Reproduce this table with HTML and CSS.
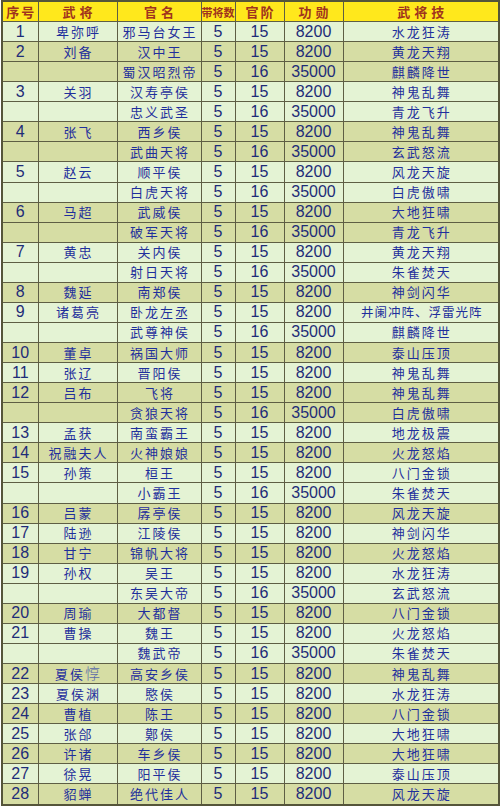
FILE: index.html
```html
<!DOCTYPE html>
<html lang="zh">
<head>
<meta charset="utf-8">
<title>武将表</title>
<link rel="stylesheet" href="styles.css">
</head>
<body>
<table class="sheet">
<colgroup>
<col class="c1"><col class="c2"><col class="c3"><col class="c4"><col class="c5"><col class="c6"><col class="c7">
</colgroup>
<thead>
<tr class="head">
<th class="tight">序号</th><th>武将</th><th>官名</th><th class="small">带将数</th><th class="tight">官阶</th><th>功勋</th><th>武将技</th>
</tr>
</thead>
<tbody>
<tr class="a"><td class="n">1</td><td class="t">卑弥呼</td><td class="t">邪马台女王</td><td class="n">5</td><td class="n">15</td><td class="n">8200</td><td class="t">水龙狂涛</td></tr>
<tr class="b"><td class="n">2</td><td class="t">刘备</td><td class="t">汉中王</td><td class="n">5</td><td class="n">15</td><td class="n">8200</td><td class="t">黄龙天翔</td></tr>
<tr class="b"><td></td><td></td><td class="t">蜀汉昭烈帝</td><td class="n">5</td><td class="n">16</td><td class="n">35000</td><td class="t">麒麟降世</td></tr>
<tr class="a"><td class="n">3</td><td class="t">关羽</td><td class="t">汉寿亭侯</td><td class="n">5</td><td class="n">15</td><td class="n">8200</td><td class="t">神鬼乱舞</td></tr>
<tr class="a"><td></td><td></td><td class="t">忠义武圣</td><td class="n">5</td><td class="n">16</td><td class="n">35000</td><td class="t">青龙飞升</td></tr>
<tr class="b"><td class="n">4</td><td class="t">张飞</td><td class="t">西乡侯</td><td class="n">5</td><td class="n">15</td><td class="n">8200</td><td class="t">神鬼乱舞</td></tr>
<tr class="b"><td></td><td></td><td class="t">武曲天将</td><td class="n">5</td><td class="n">16</td><td class="n">35000</td><td class="t">玄武怒流</td></tr>
<tr class="a"><td class="n">5</td><td class="t">赵云</td><td class="t">顺平侯</td><td class="n">5</td><td class="n">15</td><td class="n">8200</td><td class="t">风龙天旋</td></tr>
<tr class="a"><td></td><td></td><td class="t">白虎天将</td><td class="n">5</td><td class="n">16</td><td class="n">35000</td><td class="t">白虎傲啸</td></tr>
<tr class="b"><td class="n">6</td><td class="t">马超</td><td class="t">武威侯</td><td class="n">5</td><td class="n">15</td><td class="n">8200</td><td class="t">大地狂啸</td></tr>
<tr class="b"><td></td><td></td><td class="t">破军天将</td><td class="n">5</td><td class="n">16</td><td class="n">35000</td><td class="t">青龙飞升</td></tr>
<tr class="a"><td class="n">7</td><td class="t">黄忠</td><td class="t">关内侯</td><td class="n">5</td><td class="n">15</td><td class="n">8200</td><td class="t">黄龙天翔</td></tr>
<tr class="a"><td></td><td></td><td class="t">射日天将</td><td class="n">5</td><td class="n">16</td><td class="n">35000</td><td class="t">朱雀焚天</td></tr>
<tr class="b"><td class="n">8</td><td class="t">魏延</td><td class="t">南郑侯</td><td class="n">5</td><td class="n">15</td><td class="n">8200</td><td class="t">神剑闪华</td></tr>
<tr class="a"><td class="n">9</td><td class="t">诸葛亮</td><td class="t">卧龙左丞</td><td class="n">5</td><td class="n">15</td><td class="n">8200</td><td class="t long">井阑冲阵、浮雷光阵</td></tr>
<tr class="a"><td></td><td></td><td class="t">武尊神侯</td><td class="n">5</td><td class="n">16</td><td class="n">35000</td><td class="t">麒麟降世</td></tr>
<tr class="b"><td class="n">10</td><td class="t">董卓</td><td class="t">祸国大师</td><td class="n">5</td><td class="n">15</td><td class="n">8200</td><td class="t">泰山压顶</td></tr>
<tr class="a"><td class="n">11</td><td class="t">张辽</td><td class="t">晋阳侯</td><td class="n">5</td><td class="n">15</td><td class="n">8200</td><td class="t">神鬼乱舞</td></tr>
<tr class="b"><td class="n">12</td><td class="t">吕布</td><td class="t">飞将</td><td class="n">5</td><td class="n">15</td><td class="n">8200</td><td class="t">神鬼乱舞</td></tr>
<tr class="b"><td></td><td></td><td class="t">贪狼天将</td><td class="n">5</td><td class="n">16</td><td class="n">35000</td><td class="t">白虎傲啸</td></tr>
<tr class="a"><td class="n">13</td><td class="t">孟获</td><td class="t">南蛮霸王</td><td class="n">5</td><td class="n">15</td><td class="n">8200</td><td class="t">地龙极震</td></tr>
<tr class="b"><td class="n">14</td><td class="t">祝融夫人</td><td class="t">火神娘娘</td><td class="n">5</td><td class="n">15</td><td class="n">8200</td><td class="t">火龙怒焰</td></tr>
<tr class="a"><td class="n">15</td><td class="t">孙策</td><td class="t">桓王</td><td class="n">5</td><td class="n">15</td><td class="n">8200</td><td class="t">八门金锁</td></tr>
<tr class="a"><td></td><td></td><td class="t">小霸王</td><td class="n">5</td><td class="n">16</td><td class="n">35000</td><td class="t">朱雀焚天</td></tr>
<tr class="b"><td class="n">16</td><td class="t">吕蒙</td><td class="t">孱亭侯</td><td class="n">5</td><td class="n">15</td><td class="n">8200</td><td class="t">风龙天旋</td></tr>
<tr class="a"><td class="n">17</td><td class="t">陆逊</td><td class="t">江陵侯</td><td class="n">5</td><td class="n">15</td><td class="n">8200</td><td class="t">神剑闪华</td></tr>
<tr class="b"><td class="n">18</td><td class="t">甘宁</td><td class="t">锦帆大将</td><td class="n">5</td><td class="n">15</td><td class="n">8200</td><td class="t">火龙怒焰</td></tr>
<tr class="a"><td class="n">19</td><td class="t">孙权</td><td class="t">吴王</td><td class="n">5</td><td class="n">15</td><td class="n">8200</td><td class="t">水龙狂涛</td></tr>
<tr class="a"><td></td><td></td><td class="t">东吴大帝</td><td class="n">5</td><td class="n">16</td><td class="n">35000</td><td class="t">玄武怒流</td></tr>
<tr class="b"><td class="n">20</td><td class="t">周瑜</td><td class="t">大都督</td><td class="n">5</td><td class="n">15</td><td class="n">8200</td><td class="t">八门金锁</td></tr>
<tr class="a"><td class="n">21</td><td class="t">曹操</td><td class="t">魏王</td><td class="n">5</td><td class="n">15</td><td class="n">8200</td><td class="t">火龙怒焰</td></tr>
<tr class="a"><td></td><td></td><td class="t">魏武帝</td><td class="n">5</td><td class="n">16</td><td class="n">35000</td><td class="t">朱雀焚天</td></tr>
<tr class="b"><td class="n">22</td><td class="t">夏侯<span class="odd">惇</span></td><td class="t">高安乡侯</td><td class="n">5</td><td class="n">15</td><td class="n">8200</td><td class="t">神鬼乱舞</td></tr>
<tr class="a"><td class="n">23</td><td class="t">夏侯渊</td><td class="t">愍侯</td><td class="n">5</td><td class="n">15</td><td class="n">8200</td><td class="t">水龙狂涛</td></tr>
<tr class="b"><td class="n">24</td><td class="t">曹植</td><td class="t">陈王</td><td class="n">5</td><td class="n">15</td><td class="n">8200</td><td class="t">八门金锁</td></tr>
<tr class="a"><td class="n">25</td><td class="t">张郃</td><td class="t">鄚侯</td><td class="n">5</td><td class="n">15</td><td class="n">8200</td><td class="t">大地狂啸</td></tr>
<tr class="b"><td class="n">26</td><td class="t">许诸</td><td class="t">车乡侯</td><td class="n">5</td><td class="n">15</td><td class="n">8200</td><td class="t">大地狂啸</td></tr>
<tr class="a"><td class="n">27</td><td class="t">徐晃</td><td class="t">阳平侯</td><td class="n">5</td><td class="n">15</td><td class="n">8200</td><td class="t">泰山压顶</td></tr>
<tr class="b"><td class="n">28</td><td class="t">貂蝉</td><td class="t">绝代佳人</td><td class="n">5</td><td class="n">15</td><td class="n">8200</td><td class="t">风龙天旋</td></tr>
</tbody>
</table>
</body>
</html>
```
FILE: styles.css
```css
html, body {
  margin: 0;
  padding: 0;
  background: #ffffff;
}
body {
  padding: 0 0 0 1px;
}
.sheet {
  border-collapse: collapse;
  table-layout: fixed;
  width: 497px;
  height: 806px;
  border: 2px solid #55553a;
}
.c1 { width: 36px; }
.c2 { width: 79px; }
.c3 { width: 84px; }
.c4 { width: 34px; }
.c5 { width: 49px; }
.c6 { width: 59px; }
.c7 { width: 156px; }

.sheet th, .sheet td {
  border: 1px solid #5e5e44;
  padding: 0;
  text-align: center;
  vertical-align: middle;
  white-space: nowrap;
  overflow: hidden;
  line-height: 18px;
}
.head th {
  height: 19px;
  background: #ffe81c;
  color: #a0341e;
  font-family: "Noto Sans CJK SC", sans-serif;
  font-weight: 700;
  font-size: 13px;
  letter-spacing: 4px;
  text-indent: 4px;
}
.head th.tight {
  letter-spacing: 2px;
  text-indent: 2px;
}
.head th.small {
  font-size: 11px;
  letter-spacing: 0;
  text-indent: 0;
}
.sheet tbody td {
  height: 19px;
}
tr.a td { background: #e4f3d4; }
tr.b td { background: #d6dda4; }

td.n {
  font-family: "Liberation Sans", Arial, sans-serif;
  font-size: 16px;
  color: #1e2c78;
}
td.t {
  font-family: "Noto Sans CJK SC", sans-serif;
  font-size: 13px;
  color: #1f2f9c;
  letter-spacing: 2px;
  text-indent: 2px;
}
td.long {
  letter-spacing: 1px;
  font-size: 12.5px;
}
.odd {
  color: #5a6aa8;
  font-size: 15px;
  font-weight: 300;
}
```
